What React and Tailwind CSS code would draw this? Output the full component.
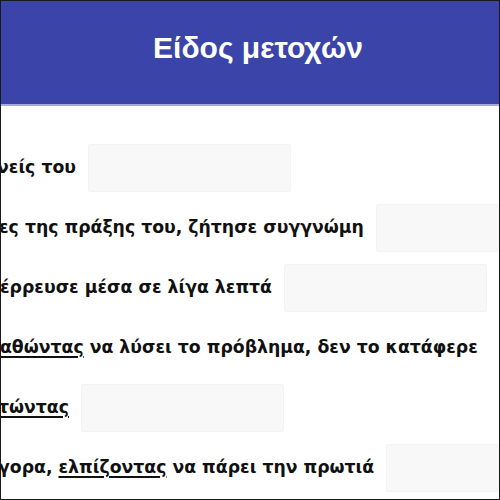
export default function App() {
  const font = { fontFamily: '"DejaVu Sans", "Noto Sans", sans-serif' };
  const Box = ({ className = "ml-3" }) => (
    <span className={`${className} inline-block h-[48px] w-[203px] shrink-0 rounded-[2px] border border-[#f3f3f3] bg-[#f8f8f8]`} />
  );
  const U = ({ children }) => (
    <span className="underline decoration-2 underline-offset-[3px]">{children}</span>
  );
  return (
    <div className="h-[500px] w-[500px] overflow-hidden border border-[#1a1a1a] bg-white">
      <header className="flex h-[105px] items-center justify-center border-b-2 border-[#a5a9dc] bg-[#3b44a8]">
        <h1 className="pb-[10px] pl-[16px] text-[30px] font-bold text-white" style={{ fontFamily: '"Liberation Sans", Arial, sans-serif' }}>
          Είδος μετοχών
        </h1>
      </header>
      <div className="flex flex-col pt-8 text-[17.3px] font-bold text-[#111]" style={font}>
        <div className="flex h-[60px] items-center whitespace-nowrap">
          <span className="ml-[-4px]">νείς του</span>
          <Box />
        </div>
        <div className="flex h-[60px] items-center whitespace-nowrap">
          <span className="ml-[-2px]">ες της πράξης του, ζήτησε συγγνώμη</span>
          <Box />
        </div>
        <div className="flex h-[60px] items-center whitespace-nowrap">
          <span className="ml-[-1px]">έρρευσε μέσα σε λίγα λεπτά</span>
          <Box />
        </div>
        <div className="flex h-[60px] items-center whitespace-nowrap">
          <span className="ml-[-1px]"><U>αθώντας</U> να λύσει το πρόβλημα, δεν το κατάφερε</span>
          <Box className="ml-6" />
        </div>
        <div className="flex h-[60px] items-center whitespace-nowrap">
          <span className="ml-[-3px]"><U>τώντας</U></span>
          <Box />
        </div>
        <div className="flex h-[60px] items-center whitespace-nowrap">
          <span className="ml-[-3px]">γορα, <U>ελπίζοντας</U> να πάρει την πρωτιά</span>
          <Box />
        </div>
      </div>
    </div>
  );
}
